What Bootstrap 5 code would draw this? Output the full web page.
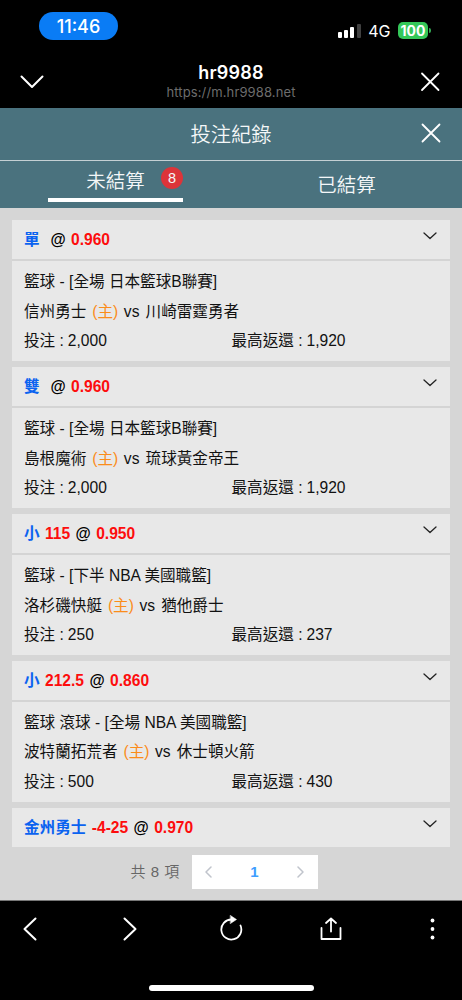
<!DOCTYPE html>
<html lang="zh-Hant">
<head>
<meta charset="utf-8">
<meta name="viewport" content="width=device-width, initial-scale=1">
<title>投注紀錄</title>
<link href="https://cdn.jsdelivr.net/npm/bootstrap@5.3.0/dist/css/bootstrap.min.css" rel="stylesheet">
<style>
  body { font-family: "Liberation Sans", "Noto Sans CJK TC", sans-serif; background: #000; color: #111; overflow: hidden; }
  svg { display: block; fill: none; stroke-linecap: round; stroke-linejoin: round; }
  .phone { width: 462px; height: 1000px; }
  .ios { font-family: Inter, sans-serif; color: #fff; }
  .status { height: 54px; padding: 12px 31px 0 39px; }
  .clock { width: 79px; height: 28px; background: #0a7cf5; font-size: 18px; line-height: 29px; font-weight: 500; }
  .signal { gap: 2.4px; height: 15px; margin-right: 7.5px; }
  .signal i { width: 4px; border-radius: 1px; background: #fff; }
  .net { font-size: 16px; line-height: 20px; margin-right: 7.5px; }
  .battery { width: 30px; height: 17px; border-radius: 5px; background: #34c759; font-size: 14px; line-height: 17px; font-weight: 700; }
  .battery-tip { width: 2px; height: 5px; border-radius: 0 2px 2px 0; background: #34a853; margin-left: 1px; }
  .browser-bar { height: 54px; padding: 0 22px 0 20px; }
  .site { font-size: 18px; line-height: 21px; font-weight: 600; letter-spacing: .2px; }
  .address { font-size: 13px; line-height: 19px; color: #6d6d6d; letter-spacing: .12px; }
  .teal { background: #4a727e; color: #f4f7f8; }
  .page-title { height: 53px; border-bottom: 1px solid #c4d0d4; padding-right: 21px; font-size: 20.3px; line-height: 54px; font-weight: 350; }
  .tabs { height: 47px; font-size: 19.5px; font-weight: 350; }
  .tab-on { width: 135px; height: 41px; margin-left: 48px; border-bottom: 4px solid #fff; line-height: 41px; }
  .tab-off { width: 135px; height: 47px; margin-right: 48px; line-height: 48px; }
  .count { width: 22px; height: 22px; right: 0; top: 6px; background: #dc3439; font-size: 14.5px; line-height: 22px; }
  .records { height: 693px; background: #d6d6d6; padding: 12px 12px 0; border-bottom: 1px solid #777; }
  .bet { background: #e8e8e8; width: 438px; margin-bottom: 6px; font-size: 15.6px; }
  .bet-head { height: 39.4px; padding: 0 13px 0 12px; line-height: 39px; font-weight: 700; gap: 5.4px; color: #000; }
  .bet-head svg { margin-top: 12px; }
  .pick { color: #0b63f0; }
  .odds { color: #fd0d0d; }
  .bet-body { height: 101.5px; border-top: 2px solid #d4d4d4; padding: 5.9px 12px 0; line-height: 29.5px; white-space: nowrap; }
  .home { color: #fb8c1a; margin: 0 1.2px 0 1.6px; }
  .versus { margin-right: 1.8px; }
  .stake { width: 207.5px; }
  .amount { margin-left: -.4px; }
  .pager { margin-top: 8px; font-size: 15px; color: #666; padding-left: 118.5px; }
  .total { width: 61px; letter-spacing: .5px; white-space: nowrap; font-weight: 350; }
  .pages { width: 126px; height: 34px; background: #fff; padding: 0 13px; }
  .page-now { color: #409eff; font-weight: 700; }
  .tools { height: 60px; padding: 0 25px 0 22px; }
  .home-bar { width: 165px; height: 6px; background: #fff; margin-top: 23.500px; margin-left: 149px; }
</style>
</head>
<body>
<div class="phone d-flex flex-column">
  <header class="ios">
    <div class="status d-flex justify-content-between">
      <div class="clock rounded-pill text-center">11:46</div>
      <div class="d-flex align-items-center" style="height:37px">
        <div class="signal d-flex align-items-end">
          <i style="height:6px"></i><i style="height:8px"></i><i style="height:11.5px"></i><i style="height:14.5px;opacity:.25"></i>
        </div>
        <span class="net">4G</span>
        <span class="battery text-center">100</span><span class="battery-tip"></span>
      </div>
    </div>
    <div class="browser-bar d-flex justify-content-between">
      <svg width="24" height="54" stroke="#fff" stroke-width="2"><path d="M1.500 22.500 12 33 22.500 22.500"/></svg>
      <div class="text-center pt-2" style="margin-right:2px"><div class="site">hr9988</div><div class="address">https://m.hr9988.net</div></div>
      <svg width="20" height="54" stroke="#fff" stroke-width="1.8"><path d="m2 19.500 16.500 16.500M18.500 19.500 2 36"/></svg>
    </div>
  </header>

  <div class="teal">
    <div class="page-title d-flex justify-content-between">
      <span style="width:41px"></span>
      <span>投注紀錄</span>
      <svg width="20" height="52" stroke="#fff" stroke-width="1.8"><path d="m1.500 16.500 17 17M18.500 16.500l-17 17"/></svg>
    </div>
    <nav class="tabs d-flex justify-content-between">
      <div class="tab-on text-center position-relative">未結算<span class="count position-absolute rounded-circle">8</span></div>
      <div class="tab-off text-center">已結算</div>
    </nav>
  </div>

  <main class="records">
    <section class="bet">
      <div class="bet-head d-flex"><span class="pick">單</span><span></span><span>@</span><span class="odds">0.960</span><svg class="ms-auto" width="14" height="9" stroke="#222" stroke-width="1.3"><path d="m1 1 6 5.500L13 1"/></svg></div>
      <div class="bet-body">
        <div>籃球 - [全場 日本籃球B聯賽]</div>
        <div>信州勇士 <span class="home">(主)</span> <span class="versus">vs</span> 川崎雷霆勇者</div>
        <div class="d-flex"><span class="stake">投注 : <span class="amount">2,000</span></span><span>最高返還 : <span class="amount">1,920</span></span></div>
      </div>
    </section>
    <section class="bet">
      <div class="bet-head d-flex"><span class="pick">雙</span><span></span><span>@</span><span class="odds">0.960</span><svg class="ms-auto" width="14" height="9" stroke="#222" stroke-width="1.3"><path d="m1 1 6 5.500L13 1"/></svg></div>
      <div class="bet-body">
        <div>籃球 - [全場 日本籃球B聯賽]</div>
        <div>島根魔術 <span class="home">(主)</span> <span class="versus">vs</span> 琉球黃金帝王</div>
        <div class="d-flex"><span class="stake">投注 : <span class="amount">2,000</span></span><span>最高返還 : <span class="amount">1,920</span></span></div>
      </div>
    </section>
    <section class="bet">
      <div class="bet-head d-flex"><span class="pick">小</span><span class="odds">115</span><span>@</span><span class="odds">0.950</span><svg class="ms-auto" width="14" height="9" stroke="#222" stroke-width="1.3"><path d="m1 1 6 5.500L13 1"/></svg></div>
      <div class="bet-body">
        <div>籃球 - [下半 NBA 美國職籃]</div>
        <div>洛杉磯快艇 <span class="home">(主)</span> <span class="versus">vs</span> 猶他爵士</div>
        <div class="d-flex"><span class="stake">投注 : <span class="amount">250</span></span><span>最高返還 : <span class="amount">237</span></span></div>
      </div>
    </section>
    <section class="bet">
      <div class="bet-head d-flex"><span class="pick">小</span><span class="odds">212.5</span><span>@</span><span class="odds">0.860</span><svg class="ms-auto" width="14" height="9" stroke="#222" stroke-width="1.3"><path d="m1 1 6 5.500L13 1"/></svg></div>
      <div class="bet-body">
        <div>籃球 滾球 - [全場 NBA 美國職籃]</div>
        <div>波特蘭拓荒者 <span class="home">(主)</span> <span class="versus">vs</span> 休士頓火箭</div>
        <div class="d-flex"><span class="stake">投注 : <span class="amount">500</span></span><span>最高返還 : <span class="amount">430</span></span></div>
      </div>
    </section>
    <section class="bet mb-0">
      <div class="bet-head d-flex"><span class="pick">金州勇士</span><span class="odds">-4-25</span><span>@</span><span class="odds">0.970</span><svg class="ms-auto" width="14" height="9" stroke="#222" stroke-width="1.3"><path d="m1 1 6 5.500L13 1"/></svg></div>
    </section>
    <div class="pager d-flex align-items-center">
      <span class="total">共 8 項</span>
      <div class="pages d-flex align-items-center justify-content-between">
        <svg width="8" height="12" stroke="#c0c4cc" stroke-width="1.5"><path d="M6 1 1 6l5 5"/></svg>
        <span class="page-now">1</span>
        <svg width="8" height="12" stroke="#c0c4cc" stroke-width="1.5"><path d="m1 1 5 5-5 5"/></svg>
      </div>
    </div>
  </main>

  <footer>
    <div class="tools d-flex">
      <svg width="16" height="58" stroke="#fff" stroke-width="2"><path d="M13.500 17.500 2.500 28l11 10.500"/></svg>
      <svg style="margin-left:84px" width="16" height="58" stroke="#fff" stroke-width="2"><path d="m2.500 17.500 11 10.500-11 10.500"/></svg>
      <svg style="margin-left:80.500px" width="24" height="58" stroke="#fff" stroke-width="1.8"><path d="M12.500 18.500a10 10 0 1 0 9 6"/><path d="m11.500 14.500 6 4-6 4z" fill="#fff" stroke="#fff" stroke-width=".5"/></svg>
      <svg style="margin-left:77.500px" width="22" height="58" stroke="#fff" stroke-width="1.800"><path d="M1.500 27V38h19V27M11 30.500V17.500M6 22l5-4.500 5 4.500"/></svg>
      <svg class="ms-auto" width="9" height="58" style="fill:#fff"><circle cx="4.500" cy="19.500" r="1.900"/><circle cx="4.500" cy="28" r="1.900"/><circle cx="4.500" cy="36.500" r="1.900"/></svg>
    </div>
    <div class="home-bar rounded-pill"></div>
  </footer>
</div>
<script src="https://cdn.jsdelivr.net/npm/bootstrap@5.3.0/dist/js/bootstrap.bundle.min.js"></script>
</body>
</html>
